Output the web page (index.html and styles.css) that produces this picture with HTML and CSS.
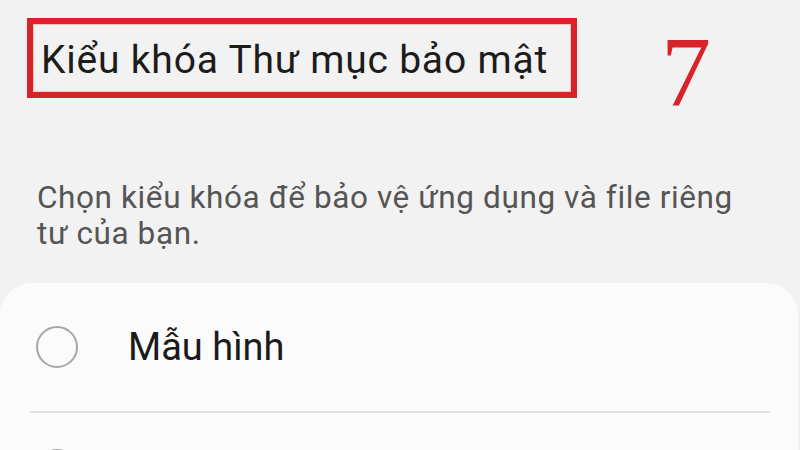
FILE: index.html
```html
<!DOCTYPE html>
<html lang="vi">
<head>
<meta charset="utf-8">
<link rel="stylesheet" href="styles.css">
</head>
<body>
<div class="page">
  <div class="header">
    <div class="title-box"><h1 class="title">Kiểu khóa Thư mục bảo mật</h1></div>
    <div class="step">7</div>
  </div>
  <p class="desc">Chọn kiểu khóa để bảo vệ ứng dụng và file riêng tư của bạn.</p>
  <div class="card">
    <div class="option">
      <span class="radio"></span>
      <span class="label">Mẫu hình</span>
    </div>
    <div class="divider"></div>
    <div class="option option-next">
      <span class="radio"></span>
    </div>
  </div>
</div>
</body>
</html>
```
FILE: styles.css
```css
html, body {
  margin: 0;
  padding: 0;
  background: #f2f2f2;
  width: 800px;
  height: 450px;
  overflow: hidden;
}
.page {
  font-family: Roboto, "Noto Sans", sans-serif;
  padding-top: 18px;
}
.header {
  display: flex;
  align-items: flex-start;
  padding-left: 27px;
}
.title-box {
  width: 530px;
  border: 6px solid #d9232a;
  box-shadow: inset 0 0 0 1px #f6c9b8;
  display: flex;
  align-items: center;
  padding: 4px 0 0 8px;
  box-sizing: content-box;
  height: 64px;
}
.title {
  margin: 0;
  font-size: 39px;
  letter-spacing: 0.8px;
  font-weight: 400;
  color: #1c1c1c;
  line-height: 1;
  white-space: nowrap;
}
.step {
  margin-left: 84px;
  margin-top: 4px;
  font-family: "Liberation Serif", serif;
  font-size: 100px;
  line-height: 1;
  color: #d9232a;
}
.desc {
  margin: 58px 0 0 37px;
  width: 705px;
  font-size: 31.5px;
  letter-spacing: 0.6px;
  line-height: 36px;
  color: #555555;
}
.card {
  margin-top: 31px;
  margin-right: 2px;
  background: #fbfbfb;
  border-radius: 32px 32px 0 0;
  padding: 0 28px 0 30px;
  height: 200px;
}
.option {
  display: flex;
  align-items: center;
  height: 128px;
  gap: 50px;
  padding-left: 6px;
}
.option-next {
  align-items: flex-start;
  padding-top: 36px;
  box-sizing: border-box;
}
.radio {
  width: 38px;
  height: 38px;
  border: 2px solid #a6a6a6;
  border-radius: 50%;
  flex: none;
}
.label {
  font-size: 38px;
  color: #1a1a1a;
}
.divider {
  height: 2px;
  background: #e0e0e0;
}
```
